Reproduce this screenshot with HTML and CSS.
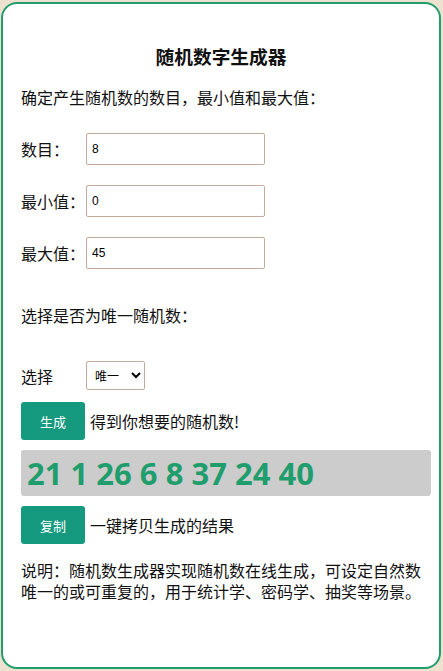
FILE: index.html
```html
<!DOCTYPE html>
<html lang="zh-CN">

<head>
    <meta charset="UTF-8">
    <meta name="viewport" content="width=device-width, initial-scale=1.0">
    <title>随机数字生成器</title>

    <link rel="stylesheet" href="styles.css">
</head>

<body>
    <div class="card">
        <h1>随机数字生成器</h1>
        <p class="intro">确定产生随机数的数目，最小值和最大值：</p>

        <div class="field">
            <label for="count">数目：</label>
            <input type="text" id="count" value="8">
        </div>
        <div class="field">
            <label for="min">最小值：</label>
            <input type="text" id="min" value="0">
        </div>
        <div class="field">
            <label for="max">最大值：</label>
            <input type="text" id="max" value="45">
        </div>

        <p class="unique-title">选择是否为唯一随机数：</p>

        <div class="field select-row">
            <label for="unique">选择</label>
            <select id="unique">
                <option>唯一</option>
                <option>可重复</option>
            </select>
        </div>

        <div class="action">
            <button type="button">生成</button>
            <span>得到你想要的随机数!</span>
        </div>

        <div class="result">21 1 26 6 8 37 24 40</div>

        <div class="action">
            <button type="button">复制</button>
            <span>一键拷贝生成的结果</span>
        </div>

        <p class="note">说明：随机数生成器实现随机数在线生成，可设定自然数唯一的或可重复的，用于统计学、密码学、抽奖等场景。</p>
    </div>
</body>

</html>
```

FILE: styles.css
```css
body {
    font-family: "Noto Sans CJK SC", "Noto Sans", sans-serif;
    background-color: #ece2cf;
    margin: 0;
    padding: 2px 2px 2px 1px;
    color: #111;
}

.card {
    border: 2px solid #1f9d6c;
    border-radius: 16px;
    background-color: #fff;
    height: 667px;
    box-sizing: border-box;
    padding: 0 8px 0 18px;
}

h1 {
    font-size: 18.72px;
    font-weight: bold;
    text-align: center;
    margin: 0 10px 0 0;
    padding-top: 39px;
    line-height: 26px;
}

.intro {
    font-size: 16px;
    margin: 17px 0 25px;
    line-height: 22px;
}

.field {
    display: flex;
    align-items: center;
    margin-bottom: 20px;
}

.field label {
    width: 65px;
    font-size: 16px;
}

.field input {
    width: 179px;
    height: 32px;
    box-sizing: border-box;
    border: 1px solid #c3ab9c;
    border-radius: 2px;
    padding: 0 5px;
    font-family: "Liberation Sans", Arial, sans-serif;
    font-size: 12px;
    color: #000;
}

.unique-title {
    font-size: 16px;
    margin: 35px 0 35px;
    line-height: 22px;
}

.select-row {
    margin-bottom: 12px;
}

.field select {
    width: 59px;
    height: 29px;
    border: 1px solid #c3ab9c;
    border-radius: 2px;
    background-color: #fff;
    font-family: "Noto Sans CJK SC", sans-serif;
    font-size: 12px;
    padding: 0 4px;
}

.action {
    display: flex;
    align-items: center;
    font-size: 16px;
}

.action button {
    background-color: #159a80;
    color: white;
    border: none;
    border-radius: 3px;
    width: 64px;
    height: 38px;
    font-family: "Noto Sans CJK SC", sans-serif;
    font-size: 13px;
    margin-right: 5px;
    cursor: pointer;
}

.result {
    background-color: #cccccc;
    border-radius: 3px;
    margin: 10px 0;
    height: 46px;
    line-height: 46px;
    padding-left: 6px;
    font-family: "Noto Sans", sans-serif;
    font-size: 31px;
    font-weight: bold;
    color: #1f9d6c;
}

.note {
    font-size: 16px;
    line-height: 21px;
    margin: 16px 0 0;
}
```
